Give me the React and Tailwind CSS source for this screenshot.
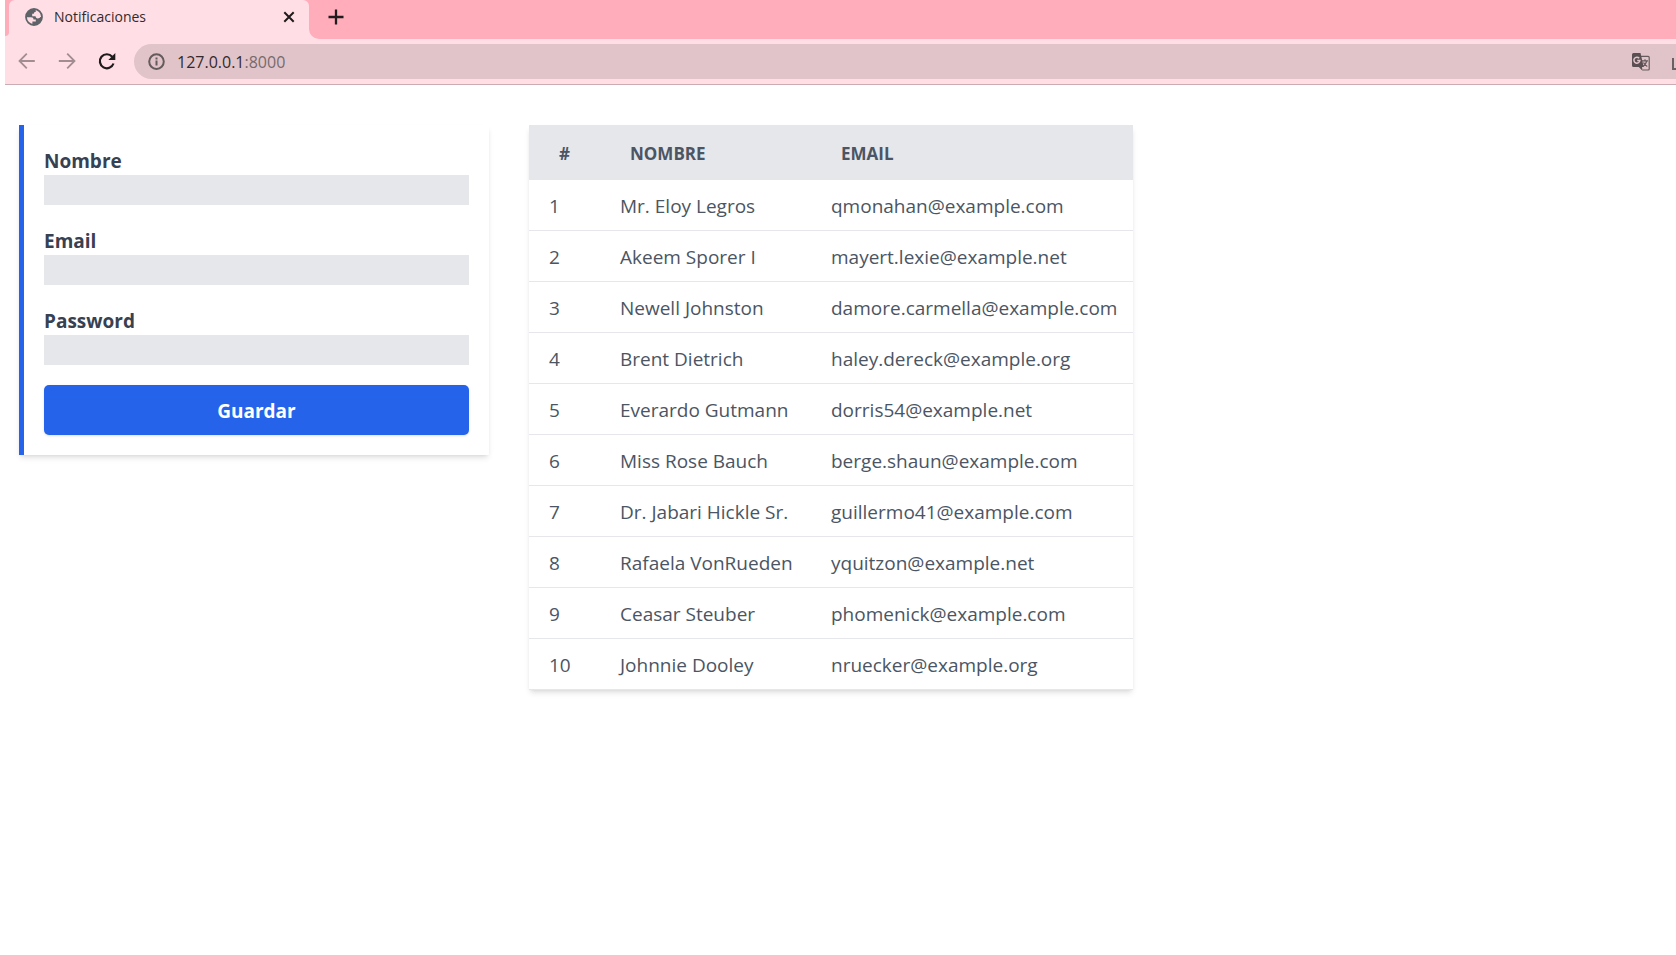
import React from "react";

const users = [
  ["Mr. Eloy Legros", "qmonahan@example.com"],
  ["Akeem Sporer I", "mayert.lexie@example.net"],
  ["Newell Johnston", "damore.carmella@example.com"],
  ["Brent Dietrich", "haley.dereck@example.org"],
  ["Everardo Gutmann", "dorris54@example.net"],
  ["Miss Rose Bauch", "berge.shaun@example.com"],
  ["Dr. Jabari Hickle Sr.", "guillermo41@example.com"],
  ["Rafaela VonRueden", "yquitzon@example.net"],
  ["Ceasar Steuber", "phomenick@example.com"],
  ["Johnnie Dooley", "nruecker@example.org"],
];

function Icon({ children, width = 2 }) {
  return (
    <svg
      viewBox="0 0 18 18"
      className="size-[18px] shrink-0"
      fill="none"
      stroke="currentColor"
      strokeWidth={width}
      aria-hidden="true"
    >
      {children}
    </svg>
  );
}

function Globe() {
  return (
    <Icon width={1.8}>
      <circle cx="9" cy="9" r="8" stroke="#5f6368" />
      <path
        d="M10.2 1.200C6 .6 2.200 3.200 1.200 7.600L1.300 9.200H6c1.700 0 2.500.8 2.500 2.200h2.300v2.200H7.400v3c4 1 7.800-1.500 9-5l.3-2.600h-1.400c-.6 1-1.300 1.400-2.400 1.400-1.500 0-2.300-.9-2.300-2.100H7.200V5.800h1.600c.2-1.400 1-2 2.300-2z"
        fill="#5f6368"
        stroke="none"
      />
    </Icon>
  );
}

function Translate() {
  return (
    <Icon width={1.2}>
      <path d="M9 3.400h7.200a1 1 0 0 1 1 1v11.600a1 1 0 0 1-1 1H10.500" />
      <path d="M10 7.800h6M13 6.300v1.500M14.800 8c-.6 2.400-2 4.200-4 5.400M11.500 9.500c.8 1.800 2 3.100 3.800 4.100" />
      <path
        d="M1.500 0h7l3.200 14H10l.5 3.800L6.800 14H1.500A1.500 1.500 0 0 1 0 12.500v-11A1.500 1.500 0 0 1 1.500 0z"
        fill="#5a4f52"
        stroke="none"
      />
      <path d="M7.200 5.200a3 3 0 1 0 .7 2.300H5.200" stroke="#e0c4c9" strokeWidth="1.500" />
    </Icon>
  );
}

function BrowserBar() {
  return (
    <header className="ml-[5px] font-['Open_Sans',sans-serif]">
      <div className="flex h-[39px] bg-[#ffacbb]">
        <div className="w-1 bg-[#ffdfe5]">
          <div className="h-9 rounded-br bg-[#ffacbb]" />
        </div>
        <div className="flex w-[300px] items-center rounded-t-md bg-[#ffdfe5] pr-[11px] pb-[5px] pl-4">
          <Globe />
          <span className="ml-[11px] flex-1 text-sm text-[#33292c]">Notificaciones</span>
          <button type="button" aria-label="Cerrar" className="text-[#1f1b1c]">
            <Icon>
              <path d="M4.300 4.300l9.400 9.400M13.700 4.300l-9.400 9.400" />
            </Icon>
          </button>
        </div>
        <div className="flex-1 bg-[#ffdfe5]">
          <div className="flex h-full items-center rounded-bl-[10px] bg-[#ffacbb] pb-[5px] pl-[18px]">
            <button type="button" aria-label="Nueva" className="text-[#1f1b1c]">
              <Icon width={2.3}>
                <path d="M9 1.500v15M1.500 9h15" />
              </Icon>
            </button>
          </div>
        </div>
      </div>
      <div className="flex h-[46px] items-center border-b border-[#c9adb3] bg-[#ffdfe5] pl-[13px]">
        <button type="button" aria-label="Atrás" className="text-[#a28e92]">
          <Icon width={1.8}>
            <path d="M16.800 8H2M8.800.7L1.500 8l7.300 7.300" />
          </Icon>
        </button>
        <button type="button" aria-label="Adelante" className="ml-[22px] text-[#a28e92]">
          <Icon width={1.8}>
            <path d="M.8 8h15.200M9.200.7l7.300 7.300-7.300 7.300" />
          </Icon>
        </button>
        <button type="button" aria-label="Recargar" className="ml-[22px] text-[#1f1b1c]">
          <Icon width={2.200}>
            <path d="M14.200 3.700A7 7 0 1 0 15.500 10.500" />
            <path d="M17.300.1v7H10.300z" fill="currentColor" stroke="none" />
          </Icon>
        </button>
        <div className="ml-[18px] flex h-[35px] flex-1 items-center overflow-hidden rounded-l-full bg-[#e0c4c9] pl-3.5 text-[#655a5c]">
          <Icon>
            <circle cx="8.500" cy="8.600" r="7.300" />
            <path d="M8.500 7.600v5M8.500 4.400v2" />
          </Icon>
          <span className="ml-[11px] flex-1 text-base text-[#33292c]">
            127.0.0.1<span className="text-[#766a6d]">:8000</span>
          </span>
          <Translate />
          <span className="mt-1 ml-[22px] h-3 w-1 border-b-2 border-l-2 border-[#6c6063]" />
        </div>
      </div>
    </header>
  );
}

function Field({ id, label, type }) {
  return (
    <div className="mb-5">
      <label htmlFor={id} className="block h-[30px] text-[19px] leading-8 font-bold text-[#374151]">
        {label}
      </label>
      <input id={id} type={type} className="block h-[30px] w-full bg-[#e5e7eb] px-2 text-lg outline-none" />
    </div>
  );
}

export default function App() {
  return (
    <div className="min-h-screen bg-white">
      <BrowserBar />
      <main className="flex items-start gap-10 px-[19px] pt-10 font-['Open_Sans',sans-serif]">
        <form
          onSubmit={(e) => e.preventDefault()}
          className="w-full max-w-[470px] border-l-[5px] border-[#2563eb] p-5 shadow-md"
        >
          <Field id="nombre" label="Nombre" type="text" />
          <Field id="email" label="Email" type="email" />
          <Field id="password" label="Password" type="password" />
          <button
            type="submit"
            className="block h-[50px] w-full rounded-[5px] bg-[#2563eb] pt-0.5 text-[19px] font-bold text-white shadow-sm"
          >
            Guardar
          </button>
        </form>
        <table className="border-separate border-spacing-0 text-left text-[#4b5563] shadow-md">
          <thead className="bg-[#e5e7eb]">
            <tr className="h-[55px] text-[17px] uppercase">
              <th className="w-[71px] pt-0.5 pl-[30px] font-bold">#</th>
              <th className="w-[211px] pt-0.5 pl-[30px] font-bold">Nombre</th>
              <th className="w-[322px] pt-0.5 pl-[30px] font-bold">Email</th>
            </tr>
          </thead>
          <tbody>
            {users.map(([name, email], i) => (
              <tr key={email} className="h-[51px] text-[19px]">
                <td className="border-b border-[#e5e7eb] pt-0.5 pl-5">{i + 1}</td>
                <td className="border-b border-[#e5e7eb] pt-0.5 pl-5 whitespace-nowrap">{name}</td>
                <td className="border-b border-[#e5e7eb] pt-0.5 pl-5 whitespace-nowrap">{email}</td>
              </tr>
            ))}
          </tbody>
        </table>
      </main>
    </div>
  );
}
